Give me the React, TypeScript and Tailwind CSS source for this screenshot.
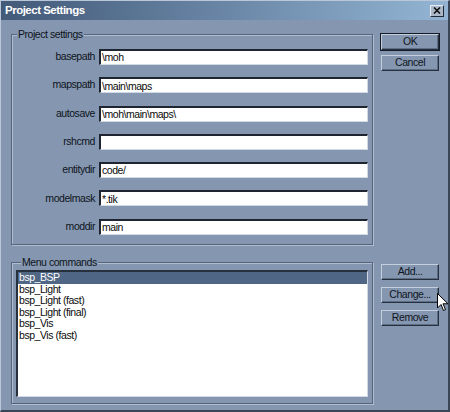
import React from 'react'

const fields: [string, string][] = [
  ['basepath', '\\moh'],
  ['mapspath', '\\main\\maps'],
  ['autosave', '\\moh\\main\\maps\\'],
  ['rshcmd', ''],
  ['entitydir', 'code/'],
  ['modelmask', '*.tik'],
  ['moddir', 'main'],
]

const commands = ['bsp_BSP', 'bsp_Light', 'bsp_Light (fast)', 'bsp_Light (final)', 'bsp_Vis', 'bsp_Vis (fast)']

function Button({ label, isDefault = false }: { label: string; isDefault?: boolean }) {
  return (
    <div className={isDefault ? 'border border-[#141a24]' : 'border border-transparent'}>
      <div className="h-[16px] flex items-center justify-center border-t border-l border-[#c3cfdc] border-b border-r border-b-[#27303e] border-r-[#27303e] shadow-[inset_-1px_-1px_0_#5d6d84] text-[#0e1420]">
        {label}
      </div>
    </div>
  )
}

function GroupBox({ title, className, children }: { title: string; className?: string; children: React.ReactNode }) {
  return (
    <fieldset className={`border border-[#56657b] shadow-[inset_1px_1px_0_#aebdd0,1px_1px_0_#aebdd0] ${className ?? ''}`}>
      <legend className="ml-[5px] px-[1px] bg-[#8597b0] text-[#0e1420] leading-[13px]">{title}</legend>
      {children}
    </fieldset>
  )
}

export default function App() {
  return (
    <div className="w-[450px] h-[412px] bg-[#8597b0] relative overflow-hidden font-['Liberation_Sans',Arial,sans-serif] text-[10.5px] tracking-[-0.45px] border-t border-l border-[#b9c7d8] border-r-2 border-b-2 border-r-[#3a4556] border-b-[#3a4556]">
      {/* title bar */}
      <div className="h-[19px] flex items-center justify-between pl-[4px] pr-[4px] bg-gradient-to-r from-[#435a79] via-[#6a86a6] to-[#93b5d3]">
        <span className="text-white font-bold text-[11.5px] tracking-[-0.5px]">Project Settings</span>
        <div className="w-[14px] h-[12px] bg-[#aab8c8] border-t border-l border-[#e4ebf2] border-b border-r border-b-[#222a36] border-r-[#222a36] flex items-center justify-center">
          <svg width="8" height="7" viewBox="0 0 8 7">
            <path d="M1 0.5 L7 6.5 M7 0.5 L1 6.5" stroke="#111" strokeWidth="1.6" />
          </svg>
        </div>
      </div>

      <div className="pl-[10px] pr-[8px] pt-[8px]">
        {/* row 1 */}
        <div className="flex">
          <GroupBox title="Project settings" className="w-[363px] h-[217px] pb-[9px]">
            <div className="flex flex-col gap-[12.3px] pt-[8px]">
              {fields.map(([label, value]) => (
                <div key={label} className="flex items-center h-[16px]">
                  <span className="w-[84px] text-right pr-[1px] text-[#0e1420]">{label}</span>
                  <div className="ml-[3px] mr-[4px] flex-1 h-[16px] bg-white border-t-2 border-l-2 border-[#1e2530] border-b border-r border-b-[#d0d9e4] border-r-[#d0d9e4] flex items-center pl-[1px] text-[#0a0a0a] leading-none">
                    {value}
                  </div>
                </div>
              ))}
            </div>
          </GroupBox>
          <div className="ml-[7px] mt-[5px] w-[60px] flex flex-col gap-[3px]">
            <Button label="OK" isDefault />
            <Button label="Cancel" />
          </div>
        </div>

        {/* row 2 */}
        <div className="flex mt-[11px]">
          <GroupBox title="Menu commands" className="w-[363px] h-[148px] px-[4px] pb-[4px]">
            <div className="mt-[1px] h-[127px] bg-white border-t-2 border-l-2 border-[#27303d] border-b border-r border-b-[#d0d9e4] border-r-[#d0d9e4]">
              {commands.map((cmd, i) => (
                <div
                  key={cmd}
                  className={`h-[11.6px] leading-[11.6px] pl-[1px] ${i === 0 ? 'bg-[#4f6684] text-white' : 'text-[#0a0a0a]'}`}
                >
                  {cmd}
                </div>
              ))}
            </div>
          </GroupBox>
          <div className="ml-[7px] mt-[7px] w-[60px] flex flex-col gap-[5px]">
            <Button label="Add..." />
            <Button label="Change..." />
            <Button label="Remove" />
          </div>
        </div>
      </div>

      {/* mouse cursor */}
      <svg className="absolute left-[436px] top-[292px]" width="12" height="20" viewBox="0 0 12 20">
        <path d="M0.5 0.5 L0.5 15 L4 11.5 L6.5 17.5 L8.5 16.6 L6 10.8 L11 10.8 Z" fill="#fff" stroke="#000" strokeWidth="1" />
      </svg>
    </div>
  )
}
